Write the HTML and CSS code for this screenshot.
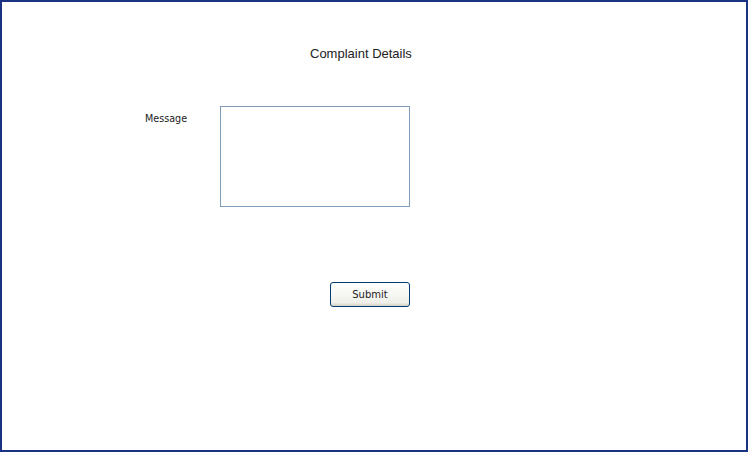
FILE: index.html
```html
<!DOCTYPE html>
<html>
<head>
<meta charset="utf-8">
<link rel="stylesheet" href="styles.css">
</head>
<body>
<div class="frame">
  <h1 class="title">Complaint Details</h1>
  <div class="row">
    <label class="label" for="msg">Message</label>
    <textarea id="msg" class="message"></textarea>
  </div>
  <div class="actions">
    <button class="submit" type="button">Submit</button>
  </div>
</div>
</body>
</html>
```
FILE: styles.css
```css
html, body {
  margin: 0;
  padding: 0;
  background: #ffffff;
}
.frame {
  box-sizing: border-box;
  width: 748px;
  height: 452px;
  border: 2px solid #1c3282;
  display: flex;
  flex-direction: column;
}
.title {
  margin: 0;
  padding-top: 44px;
  padding-left: 308px;
  font-family: "Liberation Sans", Arial, sans-serif;
  font-size: 13px;
  font-weight: normal;
  color: #222222;
  line-height: 16px;
}
.row {
  display: flex;
  margin-top: 44px;
  padding-left: 143px;
}
.label {
  width: 75px;
  padding-top: 6px;
  font-family: "DejaVu Sans", sans-serif;
  font-size: 9.6px;
  color: #222222;
  line-height: 14px;
}
.message {
  box-sizing: border-box;
  width: 190px;
  height: 101px;
  margin: 0;
  border: 1px solid #7f9db9;
  padding: 2px;
  resize: none;
  outline: none;
}
.actions {
  display: flex;
  margin-top: 75px;
  padding-left: 328px;
}
.submit {
  box-sizing: border-box;
  width: 80px;
  height: 25px;
  border: 1px solid #003c74;
  border-radius: 3px;
  background: linear-gradient(#ffffff, #f0f0ea 85%, #d6d0c5);
  font-family: "DejaVu Sans", sans-serif;
  font-size: 10px;
  color: #222222;
  padding: 0;
}
```
